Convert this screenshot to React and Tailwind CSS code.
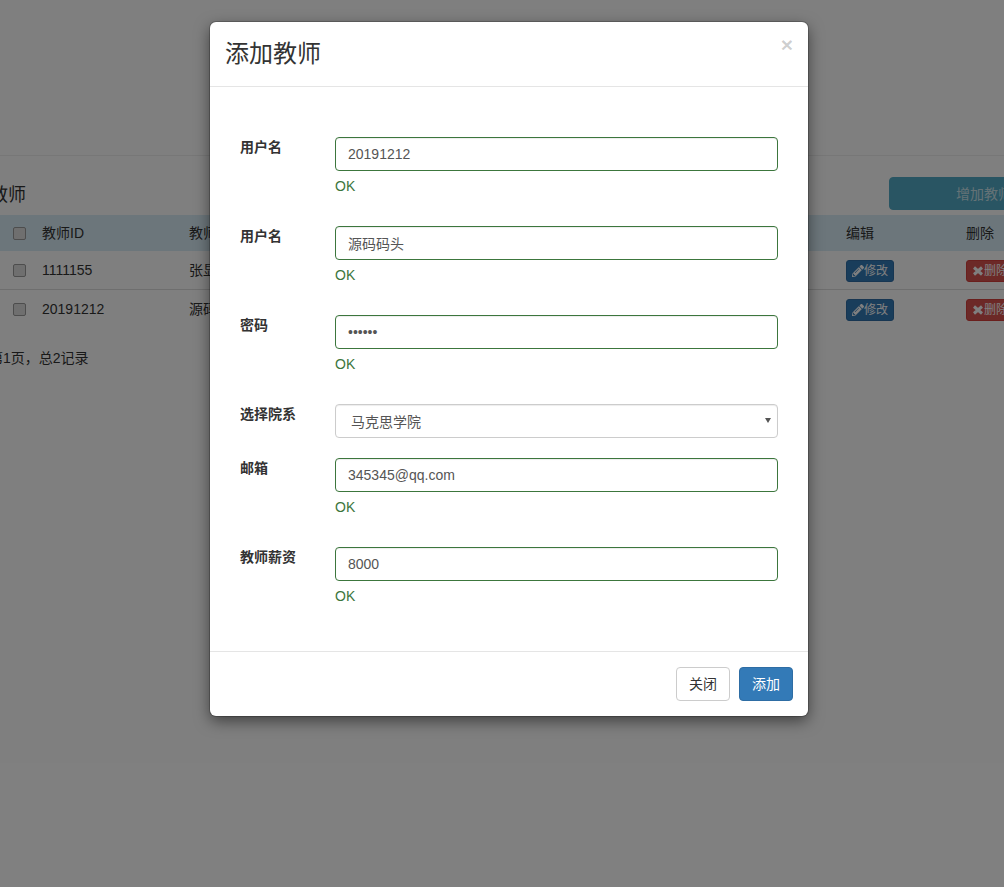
import React from "react";
import { FaPencilAlt } from "react-icons/fa";

const FIELDS_TOP = [
  { label: "用户名", value: "20191212", type: "text" },
  { label: "用户名", value: "源码码头", type: "text" },
  { label: "密码", value: "123456", type: "password" },
];

const FIELDS_BOTTOM = [
  { label: "邮箱", value: "345345@qq.com", type: "text" },
  { label: "教师薪资", value: "8000", type: "text" },
];

const ROWS = [
  { id: "1111155", name: "张显", line: true },
  { id: "20191212", name: "源码码头", line: false },
];

const Check = () => (
  <div className="w-[42px] pl-[13px] flex items-center">
    <input type="checkbox" readOnly className="appearance-none w-[13px] h-[13px] m-0 bg-[#dedede] border border-[#9a9a9a] rounded-[2px]" />
  </div>
);

const Field = ({ label, value, type }) => (
  <div className="flex mb-5">
    <label className="w-[95px] shrink-0 text-sm leading-5 font-bold text-[#333]">{label}</label>
    <div className="w-[443px]">
      <input
        type={type}
        defaultValue={value}
        readOnly
        className="block w-full h-[34px] px-3 py-1.5 text-sm text-[#555] bg-white border border-[#3c763d] rounded outline-none shadow-[inset_0_1px_1px_rgba(0,0,0,0.075)]"
      />
      <span className="block mt-[5px] mb-2.5 text-sm leading-5 text-[#3c763d]">OK</span>
    </div>
  </div>
);

const App = () => {
  return (
    <div className="relative w-[1004px] h-[887px] overflow-hidden bg-white text-sm text-[#333] font-['Liberation_Sans','Noto_Sans_CJK_SC',sans-serif]">
      {/* Page behind the dialog, scrolled a little to the right */}
      <div className="w-[1100px]">
        <div className="h-[156px] border-b border-[#eee]" />

        <div className="flex items-start h-[59px]">
          <h2 className="w-[899px] -ml-[10px] mt-[22px] text-lg leading-[34px] text-[#333]">教师</h2>
          <button className="w-[190px] h-[33px] mt-[21px] text-sm text-white/70 bg-[#52abc6] border border-[#52abc6] rounded">
            增加教师
          </button>
        </div>

        <div className="flex items-center h-[36px] bg-[#d9edf7]">
          <Check />
          <div className="w-[147px]">教师ID</div>
          <div className="w-[657px]">教师名</div>
          <div className="w-[120px]">编辑</div>
          <div>删除</div>
        </div>

        {ROWS.map((row) => (
          <div key={row.id} className={`flex items-center h-[39px] border-b ${row.line ? "border-[#ddd]" : "border-transparent"}`}>
            <Check />
            <div className="w-[147px]">{row.id}</div>
            <div className="w-[657px]">{row.name}</div>
            <div className="w-[120px] pt-0.5">
              <button className="flex items-center h-[22px] w-[48px] px-[5px] text-xs text-white bg-[#337ab7] border border-[#2e6da4] rounded-[3px]">
                <FaPencilAlt className="w-[12px] h-[12px]" />修改
              </button>
            </div>
            <div className="pt-0.5">
              <button className="flex items-center h-[22px] w-[48px] px-[5px] text-xs text-nowrap text-white bg-[#d9534f] border border-[#d43f3a] rounded-[3px]">
                <svg className="w-[12px] h-[12px] shrink-0" viewBox="0 0 12 12">
                  <path d="M2 2.5l8 7M10 2.5l-8 7" stroke="currentColor" strokeWidth="3" fill="none" />
                </svg>
                删除
              </button>
            </div>
          </div>
        ))}

        <p className="-ml-[11px] mt-[19px] leading-5">{"第1页\uFF0C总2记录"}</p>
      </div>

      {/* Backdrop and dialog */}
      <div className="absolute inset-0 bg-black/50">
        <div className="ml-[210px] mt-[22px] w-[598px] h-[694px] bg-white rounded-md shadow-[0_0_0_1px_rgba(0,0,0,0.2),0_5px_15px_rgba(0,0,0,0.5)] flex flex-col">
          <div className="relative h-[65px] px-[15px] pt-[15px] border-b border-[#e5e5e5]">
            <h4 className="text-2xl leading-[33px] text-[#333]">添加教师</h4>
            <span className="absolute right-[15px] top-[11px] text-[21px] leading-[24px] font-bold text-black/20">×</span>
          </div>

          <div className="flex-1 pl-[30px] pt-[50px]">
            {FIELDS_TOP.map((f, i) => (
              <Field key={i} {...f} />
            ))}
            <div className="flex mb-5">
              <label className="w-[95px] shrink-0 text-sm leading-5 font-bold text-[#333]">选择院系</label>
              <div className="relative w-[443px]">
                <select
                  defaultValue="马克思学院"
                  className="appearance-none block w-full h-[34px] pl-[15px] pr-3 pt-0.5 text-sm text-[#555] bg-white border border-[#ccc] rounded outline-none shadow-[inset_0_1px_1px_rgba(0,0,0,0.075)]"
                >
                  <option>马克思学院</option>
                </select>
                {/* dropdown arrow */}
                <svg className="absolute left-[430px] top-[14px] w-[6px] h-[5px] pointer-events-none" viewBox="0 0 6 5">
                  <path d="M0 0h6L3 5z" fill="#555" />
                </svg>
              </div>
            </div>
            {FIELDS_BOTTOM.map((f, i) => (
              <Field key={i} {...f} />
            ))}
          </div>

          <div className="flex justify-end gap-[9px] h-[65px] p-[15px] border-t border-[#e5e5e5]">
            <button className="w-[54px] h-[34px] text-sm text-[#333] bg-white border border-[#ccc] rounded">关闭</button>
            <button className="w-[54px] h-[34px] text-sm text-white bg-[#337ab7] border border-[#2e6da4] rounded">添加</button>
          </div>
        </div>
      </div>
    </div>
  );
};

export default App;
